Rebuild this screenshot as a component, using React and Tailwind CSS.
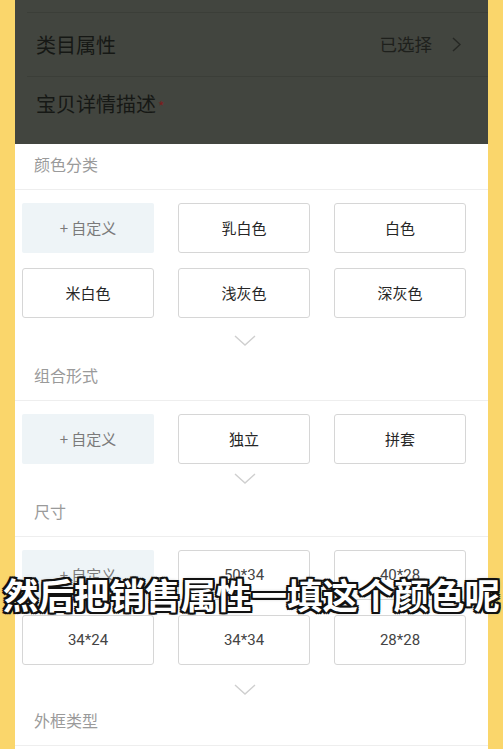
import React from "react";

const sections = [
  {
    title: "颜色分类",
    items: ["乳白色", "白色", "米白色", "浅灰色", "深灰色"],
    chevronGap: "mt-[17px]",
    next: "组合形式",
    nextHeight: "h-[55px]",
  },
  {
    items: ["独立", "拼套"],
    chevronGap: "mt-[9px]",
    next: "尺寸",
    nextHeight: "h-[53px]",
  },
  {
    items: ["50*34", "40*28", "34*24", "34*34", "28*28"],
    chevronGap: "mt-[19px]",
    next: "外框类型",
    nextHeight: "h-[51px]",
  },
];

function Header({ title, height }) {
  return (
    <div className={`flex items-end border-b border-[#eeeeee] pb-[14px] pl-[19px] ${height}`}>
      <span className="text-[16px] leading-[22px] text-[#9a9a9a]">{title}</span>
    </div>
  );
}

function Chip({ label }) {
  const isNumber = /\d/.test(label);
  return (
    <div
      className={`flex h-[50px] items-center justify-center rounded-[3px] border border-[#d6d6d6] bg-white text-[15px] ${
        isNumber ? "font-['Roboto','Noto_Sans_CJK_SC',sans-serif] text-[#444444]" : "text-[#262626]"
      }`}
    >
      {label}
    </div>
  );
}

function ChevronDown() {
  return (
    <svg width="22" height="11" viewBox="0 0 22 11" fill="none">
      <polyline points="1,1 11,10 21,1" stroke="#cfcfcf" strokeWidth="1.4" />
    </svg>
  );
}

export default function App() {
  return (
    <div className="relative h-[749px] w-[503px] overflow-hidden bg-[#fad66b] px-[15px] font-['Noto_Sans_CJK_SC','Noto_Sans',sans-serif]">
      {/* dimmed page behind the sheet */}
      <div className="h-[144px] bg-[#42453f]">
        <div className="ml-[12px] h-[13px] border-b border-[#3b3e38]" />
        <div className="ml-[12px] flex h-[64px] items-center justify-between border-b border-[#3b3e38] pl-[9px] pr-[27px]">
          <span className="text-[20px] text-[#161815]">类目属性</span>
          <div className="flex items-center gap-[20px]">
            <span className="text-[17.5px] text-[#1e201c]">已选择</span>
            <svg width="9" height="15" viewBox="0 0 9 15" fill="none">
              <polyline points="1,1 8,7.5 1,14" stroke="#262824" strokeWidth="1.4" />
            </svg>
          </div>
        </div>
        <div className="flex h-[54px] items-center pl-[21px]">
          <span className="text-[20px] text-[#161815]">宝贝详情描述</span>
          <span className="ml-[2px] mt-[4px] text-[14px] text-[#7a1d1d]">*</span>
        </div>
      </div>

      {/* bottom sheet */}
      <div className="bg-white">
        <Header title="颜色分类" height="h-[46px]" />
        {sections.map((s, i) => (
          <div key={i}>
            <div className="grid grid-cols-[132px_132px_132px] gap-x-[24px] gap-y-[15px] pl-[7px] pt-[13px]">
              <div className="flex h-[50px] items-center justify-center rounded-[2px] bg-[#eef4f7] text-[15px] text-[#7a7a7a]">
                + 自定义
              </div>
              {s.items.map((label) => (
                <Chip key={label} label={label} />
              ))}
            </div>
            <div className={`flex justify-center pr-[14px] ${s.chevronGap}`}>
              <ChevronDown />
            </div>
            <Header title={s.next} height={s.nextHeight} />
          </div>
        ))}
        <div className="h-[10px]" />
      </div>

      {/* video subtitle */}
      <div className="absolute left-0 top-[575px] w-[503px] text-center text-[35.5px] font-bold leading-[38px] text-white [text-shadow:2px_0_0_#111,-2px_0_0_#111,0_2px_0_#111,0_-2px_0_#111,2px_2px_0_#111,-2px_-2px_0_#111,2px_-2px_0_#111,-2px_2px_0_#111,0_0_4px_#888]">
        然后把销售属性一填这个颜色呢
      </div>
    </div>
  );
}
